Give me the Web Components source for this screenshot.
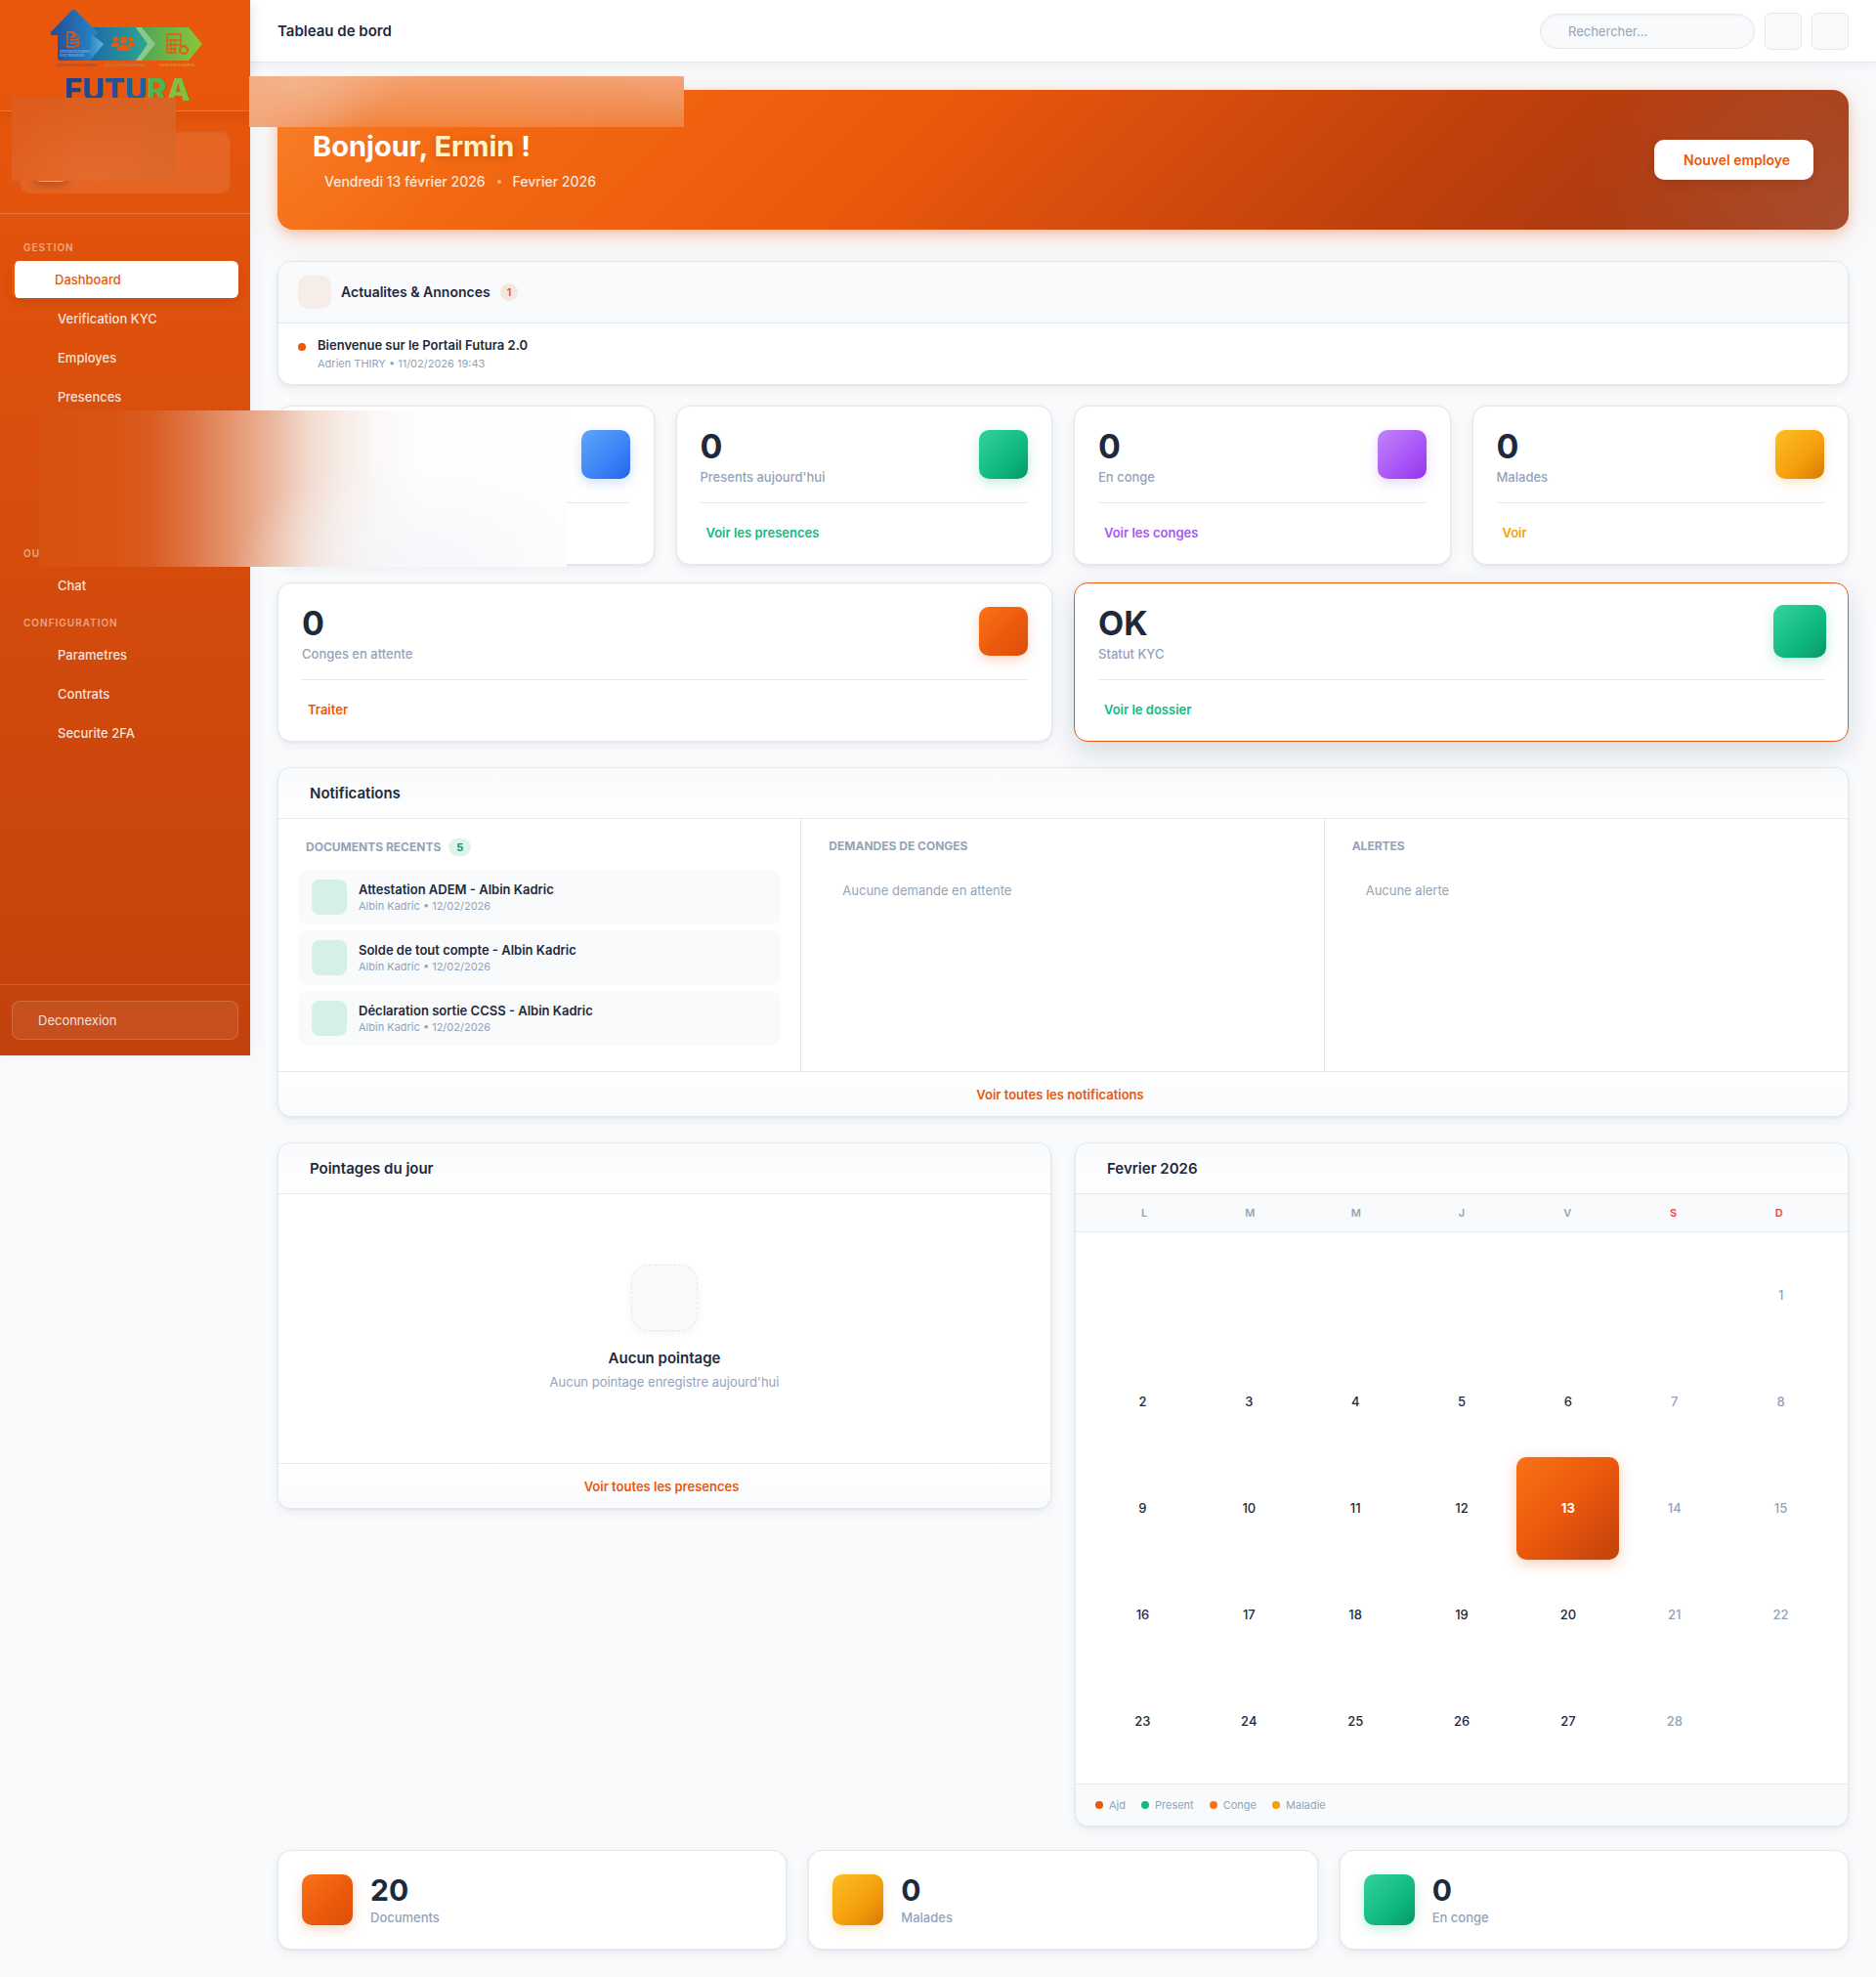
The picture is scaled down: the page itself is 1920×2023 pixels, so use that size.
<!DOCTYPE html>
<html lang="fr">
<head>
<meta charset="utf-8">
<meta name="viewport" content="width=device-width, initial-scale=1">
<title>Tableau de bord</title>
<style>
  :root {
    --orange: #ea580c;
    --orange-dark: #c2410c;
    --ink: #1e293b;
    --muted: #94a3b8;
    --line: #e2e8f0;
    --soft: #f8fafc;
    --green: #10b981;
    --shadow: 0 1px 3px rgba(15, 23, 42, 0.06), 0 4px 12px rgba(15, 23, 42, 0.05);
  }
  body {
    margin: 0;
    background: var(--soft);
    color: var(--ink);
    font-family: Inter, "Liberation Sans", sans-serif;
    font-size: 13px;
    line-height: 20px;
  }
</style>
</head>
<body>
<futura-app></futura-app>

<script>
(function FuturaDashboard() {

const GRADIENTS = {
  blue: ['#60a5fa', '#3b82f6', '#2563eb', '59, 130, 246'],
  green: ['#34d399', '#10b981', '#059669', '16, 185, 129'],
  purple: ['#c084fc', '#a855f7', '#9333ea', '168, 85, 247'],
  amber: ['#fbbf24', '#f59e0b', '#d97706', '245, 158, 11'],
  orange: ['#f97316', '#ea580c', '#d9500b', '234, 88, 12'],
};

// coloured rounded square used by all the stat cards
class ColorTile extends HTMLElement {
  connectedCallback() {
    const [from, mid, to, glow] = GRADIENTS[this.getAttribute('color')];
    this.attachShadow({mode: 'open'});
    this.shadowRoot.innerHTML = `
      <style>
        :host {
          display: block;
          flex: none;
          width: var(--tile-size, 50px);
          height: var(--tile-size, 50px);
          border-radius: 10px;
          background: linear-gradient(135deg, ${from}, ${mid} 60%, ${to});
          box-shadow: 0 4px 12px rgba(${glow}, 0.25);
        }
      </style>`;
  }
}

class FuturaLogo extends HTMLElement {
  connectedCallback() {
    this.attachShadow({mode: 'open'});
    this.shadowRoot.innerHTML = `
      <style>
        :host { display: block; height: 113px; overflow: hidden; }
        svg { display: block; margin: 0 auto; }
        text { font-family: Inter, sans-serif; }
      </style>
      <svg width="160" height="113" viewBox="48 0 160 113" role="img" aria-label="Futura">
        <defs>
          <linearGradient id="house"><stop offset="0" stop-color="#234b96"/><stop offset="1" stop-color="#2489c6"/></linearGradient>
          <linearGradient id="mid"><stop offset="0" stop-color="#1d69a8"/><stop offset="1" stop-color="#2cab8c"/></linearGradient>
          <linearGradient id="end"><stop offset="0" stop-color="#4aa556"/><stop offset="1" stop-color="#8cc63a"/></linearGradient>
          <linearGradient id="tip"><stop offset="0" stop-color="#2a86c0"/><stop offset="1" stop-color="#5fb5dd"/></linearGradient>
        </defs>
        <path d="M141 28h52l14 17-14 17h-52l14-17z" fill="url(#end)"/>
        <path d="M92 28h48l14 17-14 17H92z" fill="url(#mid)"/>
        <path d="M139 28h6l14 17-14 17h-6l12-17z" fill="#8cc88a"/>
        <path d="M92 33l14 12-14 17z" fill="url(#tip)"/>
        <path d="M75.500 10q1 0 2 1l22 22q1 2-1 3h-6v26H62q-3 0-3-3V36h-6q-2-1-1-3l21-22q1-1 2.500-1z" fill="url(#house)"/>
        <g fill="none" stroke="#ea580c" stroke-width="1.300" stroke-linecap="round">
          <path d="M78 36l-3-3h-6v15h9M75 33v4h3M72 38h3M72 41h5M72 44h5"/>
          <path d="M78 40l1 1 2-3M78 46l2 1 1-3M81 42l-3 2"/>
          <path d="M171 35h14v6h-14zM171 41v13h9M185 41v6M175 42v11M179 42v11M171 46h13M171 50h9"/>
          <circle cx="188" cy="51" r="3.500"/>
          <circle cx="188" cy="51" r="4.500" stroke-dasharray="1.500 2"/>
        </g>
        <g fill="#ea580c">
          <circle cx="118.500" cy="40" r="2.500"/>
          <circle cx="134" cy="40" r="2.500"/>
          <circle cx="126.500" cy="41" r="3.500"/>
          <path d="M114 48q0-5 4-5 3 0 4 3l-2 2zM138.500 48q0-5-4-5-3 0-4 3l2 2z"/>
          <path d="M119.500 52q0-6 7-6t7 6z"/>
        </g>
        <g font-size="4" font-weight="700">
          <text x="61" y="54" fill="#6fa6d6" font-size="3">GESTION DOCUMENT</text>
          <text x="61" y="58" fill="#6fa6d6" font-size="3">ELECTRONIQUES</text>
          <text x="57" y="68" fill="#7a5a6c">GESTION DOCUMENT</text>
          <text x="107" y="68" fill="#9a8a66">GESTION PERSONNEL</text>
          <text x="163" y="68" fill="#b7a03c">GESTION COMPTA</text>
        </g>
        <text y="103" x="66" font-size="31" font-weight="800"><tspan fill="#21428a">F</tspan><tspan fill="#1f4a94">U</tspan><tspan fill="#1e549c">T</tspan><tspan fill="#1d60a4">U</tspan><tspan fill="#55b14b">R</tspan><tspan fill="#7ec142">A</tspan></text>
      </svg>`;
  }
}

class NavLink extends HTMLElement {
  connectedCallback() {
    this.attachShadow({mode: 'open'});
    this.shadowRoot.innerHTML = `
      <style>
        :host { display: block; height: 38px; margin-bottom: 2px; }
        a {
          display: block;
          box-sizing: border-box;
          height: 38px;
          padding-left: 47px;
          border-radius: 6px;
          color: rgba(255, 255, 255, 0.85);
          font-size: 13px;
          font-weight: 500;
          line-height: 38px;
          text-decoration: none;
        }
        :host([active]) a {
          border-left: 3px solid var(--orange);
          padding-left: 41px;
          background: #fff;
          background-clip: padding-box;
          color: var(--orange);
          box-shadow: 0 4px 12px rgba(0, 0, 0, 0.1);
        }
      </style>
      <a href="#"><slot></slot></a>`;
  }
}

class AppSidebar extends HTMLElement {
  connectedCallback() {
    this.attachShadow({mode: 'open'});
    this.shadowRoot.innerHTML = `
      <style>
        :host {
          position: relative;
          z-index: 2;
          display: flex;
          flex-direction: column;
          flex: none;
          box-sizing: border-box;
          width: 256px;
          height: 1080px;
          background: linear-gradient(180deg, var(--orange), var(--orange-dark));
          box-shadow: 4px 0 16px rgba(15, 23, 42, 0.04);
        }
        header {
          border-bottom: 1px solid rgba(255, 255, 255, 0.2);
          box-shadow: 0 4px 12px rgba(0, 0, 0, 0.08);
        }
        .user {
          padding: 20px;
          border-bottom: 1px solid rgba(255, 255, 255, 0.2);
        }
        .card {
          box-sizing: border-box;
          height: 64px;
          padding: 12px 14px;
          border-radius: 10px;
          background: rgba(255, 255, 255, 0.1);
          box-shadow: inset 0 1px 3px rgba(0, 0, 0, 0.1);
        }
        .avatar {
          box-sizing: border-box;
          width: 36px;
          height: 40px;
          border: 1px solid rgba(255, 255, 255, 0.4);
          border-radius: 8px;
          background: #e8692c;
          box-shadow: 0 4px 8px rgba(0, 0, 0, 0.2);
        }
        nav { flex: 1; padding: 23px 12px 0; }
        h2 {
          margin: 0;
          padding: 1px 12px 4px;
          color: rgba(255, 255, 255, 0.5);
          font-size: 10px;
          font-weight: 600;
          line-height: 20px;
          letter-spacing: 1px;
        }
        nav > * + h2 { margin-top: 8px; }
        .gap { height: 120px; }
        footer {
          padding: 16px 12px;
          border-top: 1px solid rgba(255, 255, 255, 0.15);
        }
        button {
          display: block;
          width: 100%;
          height: 40px;
          padding: 0 26px;
          border: 1px solid rgba(255, 255, 255, 0.15);
          border-radius: 8px;
          background: rgba(255, 255, 255, 0.08);
          color: rgba(255, 255, 255, 0.85);
          font: inherit;
          font-size: 13px;
          text-align: left;
        }
      </style>
      <header><futura-logo></futura-logo></header>
      <div class="user"><div class="card"><div class="avatar"></div></div></div>
      <nav>
        <h2>GESTION</h2>
        <nav-link active>Dashboard</nav-link>
        <nav-link>Verification KYC</nav-link>
        <nav-link>Employes</nav-link>
        <nav-link>Presences</nav-link>
        <div class="gap"></div>
        <h2>OU</h2>
        <nav-link>Chat</nav-link>
        <h2>CONFIGURATION</h2>
        <nav-link>Parametres</nav-link>
        <nav-link>Contrats</nav-link>
        <nav-link>Securite 2FA</nav-link>
      </nav>
      <footer><button type="button">Deconnexion</button></footer>`;
  }
}

class AppTopbar extends HTMLElement {
  connectedCallback() {
    this.attachShadow({mode: 'open'});
    this.shadowRoot.innerHTML = `
      <style>
        :host {
          display: flex;
          align-items: center;
          gap: 10px;
          box-sizing: border-box;
          height: 64px;
          padding: 0 28px;
          border-bottom: 1px solid var(--line);
          background: #fff;
          box-shadow: 0 2px 12px rgba(15, 23, 42, 0.06);
        }
        strong { flex: 1; font-size: 15px; font-weight: 600; }
        input {
          box-sizing: border-box;
          width: 220px;
          height: 36px;
          padding: 0 28px;
          border: 1px solid var(--line);
          border-radius: 18px;
          background: var(--soft);
          box-shadow: inset 0 1px 3px rgba(15, 23, 42, 0.05);
          font: inherit;
          font-size: 13px;
        }
        input::placeholder { color: var(--muted); opacity: 1; }
        button {
          width: 38px;
          height: 38px;
          padding: 0;
          border: 1px solid var(--line);
          border-radius: 6px;
          background: var(--soft);
        }
      </style>
      <strong>Tableau de bord</strong>
      <input type="search" placeholder="Rechercher..." aria-label="Rechercher">
      <button type="button" aria-label="Messages"></button>
      <button type="button" aria-label="Profil"></button>`;
  }
}

class WelcomeHero extends HTMLElement {
  connectedCallback() {
    this.attachShadow({mode: 'open'});
    this.shadowRoot.innerHTML = `
      <style>
        :host {
          display: flex;
          align-items: center;
          justify-content: space-between;
          box-sizing: border-box;
          height: 143px;
          padding: 0 36px;
          border-radius: 16px;
          background:
            radial-gradient(circle at 100% 100%, rgba(255, 255, 255, 0.12), transparent 280px),
            radial-gradient(circle at 0 30%, rgba(255, 255, 255, 0.07), transparent 180px),
            linear-gradient(135deg, #f97316, #ea580c 40%, #c2410c 70%, #9a3412);
          box-shadow: 0 8px 32px rgba(234, 88, 12, 0.15), 0 4px 12px rgba(234, 88, 12, 0.25);
          color: #fff;
        }
        h1 {
          margin: 1px 0 8px;
          font-size: 29px;
          font-weight: 700;
          line-height: 36px;
        }
        em {
          color: #fef3c7;
          font-style: normal;
          text-shadow: 0 2px 8px rgba(0, 0, 0, 0.2);
        }
        p {
          display: flex;
          gap: 12px;
          margin: 0;
          padding-left: 12px;
          color: rgba(255, 255, 255, 0.85);
          font-size: 14px;
          font-weight: 500;
        }
        i {
          align-self: center;
          width: 4px;
          height: 4px;
          border-radius: 50%;
          background: rgba(255, 255, 255, 0.5);
        }
        button {
          height: 41px;
          padding: 0 24px 0 30px;
          border: 0;
          border-radius: 10px;
          background: #fff;
          box-shadow: 0 4px 12px rgba(0, 0, 0, 0.1);
          color: var(--orange);
          font: inherit;
          font-size: 14px;
          font-weight: 600;
        }
      </style>
      <div>
        <h1>Bonjour, <em>Ermin</em> !</h1>
        <p><span>Vendredi 13 février 2026</span><i></i><span>Fevrier 2026</span></p>
      </div>
      <button type="button">Nouvel employe</button>`;
  }
}

class NewsCard extends HTMLElement {
  connectedCallback() {
    this.attachShadow({mode: 'open'});
    this.shadowRoot.innerHTML = `
      <style>
        :host {
          display: block;
          overflow: hidden;
          border: 1px solid var(--line);
          border-radius: 14px;
          background: #fff;
          box-shadow: var(--shadow);
        }
        header {
          display: flex;
          align-items: center;
          gap: 10px;
          padding: 14px 20px;
          border-bottom: 1px solid var(--line);
          background: var(--soft);
        }
        .icon {
          width: 34px;
          height: 34px;
          border-radius: 10px;
          background: rgba(234, 88, 12, 0.08);
        }
        h2 { margin: 0; font-size: 14px; font-weight: 600; line-height: 22px; }
        .badge {
          padding: 0 7px;
          border-radius: 9px;
          background: rgba(234, 88, 12, 0.12);
          color: var(--orange);
          font-size: 11px;
          font-weight: 600;
          line-height: 18px;
        }
        article { display: flex; gap: 12px; padding: 12px 20px; }
        .dot {
          width: 8px;
          height: 8px;
          margin-top: 8px;
          border-radius: 50%;
          background: var(--orange);
        }
        h3 { margin: 0; font-size: 13px; font-weight: 600; }
        p { margin: 0; color: var(--muted); font-size: 11px; line-height: 18px; }
      </style>
      <header>
        <div class="icon"></div>
        <h2>Actualites &amp; Annonces</h2>
        <span class="badge">1</span>
      </header>
      <article>
        <div class="dot"></div>
        <div>
          <h3>Bienvenue sur le Portail Futura 2.0</h3>
          <p>Adrien THIRY • 11/02/2026 19:43</p>
        </div>
      </article>`;
  }
}

// <stat-card value="" label="" color="">link text</stat-card>
class StatCard extends HTMLElement {
  connectedCallback() {
    const color = this.getAttribute('color');
    this.attachShadow({mode: 'open'});
    this.shadowRoot.innerHTML = `
      <style>
        :host {
          display: block;
          padding: 24px;
          border: 1px solid var(--line);
          border-radius: 14px;
          background: #fff;
          box-shadow: var(--shadow);
        }
        :host([wide]) { grid-column: span 2; }
        :host([highlight]) {
          border-color: var(--orange);
          box-shadow: 0 10px 28px rgba(15, 23, 42, 0.14);
        }
        :host([highlight]) color-tile { transform: scale(1.08); }
        .top { display: flex; justify-content: space-between; height: 58px; }
        .value { font-size: 34px; font-weight: 700; line-height: 34px; }
        .label { margin-top: 4px; color: var(--muted); font-weight: 500; }
        .foot {
          margin-top: 16px;
          padding: 22px 6px 0;
          border-top: 1px solid var(--line);
          line-height: 16px;
        }
        a {
          color: ${GRADIENTS[color][1]};
          font-size: 13px;
          font-weight: 600;
          text-decoration: none;
        }
      </style>
      <div class="top">
        <div>
          <div class="value">${this.getAttribute('value')}</div>
          <div class="label">${this.getAttribute('label')}</div>
        </div>
        <color-tile color="${color}"></color-tile>
      </div>
      <div class="foot"><a href="#"><slot></slot></a></div>`;
  }
}

class MiniStat extends HTMLElement {
  connectedCallback() {
    this.attachShadow({mode: 'open'});
    this.shadowRoot.innerHTML = `
      <style>
        :host {
          --tile-size: 52px;
          display: flex;
          gap: 18px;
          padding: 24px;
          border: 1px solid var(--line);
          border-radius: 14px;
          background: #fff;
          box-shadow: var(--shadow);
        }
        .value { font-size: 30px; font-weight: 700; line-height: 32px; }
        .label { margin-top: 4px; color: var(--muted); font-weight: 500; line-height: 16px; }
      </style>
      <color-tile color="${this.getAttribute('color')}"></color-tile>
      <div>
        <div class="value">${this.getAttribute('value')}</div>
        <div class="label">${this.getAttribute('label')}</div>
      </div>`;
  }
}

// titled card, the "more" attribute adds a footer link
class PanelCard extends HTMLElement {
  connectedCallback() {
    const more = this.getAttribute('more');
    this.attachShadow({mode: 'open'});
    this.shadowRoot.innerHTML = `
      <style>
        :host {
          display: block;
          overflow: hidden;
          border: 1px solid var(--line);
          border-radius: 14px;
          background: #fff;
          box-shadow: var(--shadow);
        }
        h2 {
          margin: 0;
          padding: 0 32px;
          border-bottom: 1px solid var(--line);
          background: linear-gradient(180deg, var(--soft), #fff);
          font-size: 15px;
          font-weight: 600;
          line-height: 51px;
        }
        footer {
          padding: 13px 6px 12px 0;
          border-top: 1px solid var(--line);
          background: linear-gradient(180deg, #fff, var(--soft));
          line-height: 20px;
          text-align: center;
        }
        a { color: var(--orange); font-weight: 600; text-decoration: none; }
      </style>
      <h2>${this.getAttribute('heading')}</h2>
      <slot></slot>
      ${more ? `<footer><a href="#">${more}</a></footer>` : ''}`;
  }
}

class NotificationColumns extends HTMLElement {
  connectedCallback() {
    const docs = ['Attestation ADEM', 'Solde de tout compte', 'Déclaration sortie CCSS'];
    this.attachShadow({mode: 'open'});
    this.shadowRoot.innerHTML = `
      <style>
        :host { display: grid; grid-template-columns: repeat(3, 1fr); }
        section { padding: 20px 20px 26px; }
        section:not(:last-child) { border-right: 1px solid var(--line); }
        h3 {
          display: flex;
          align-items: center;
          gap: 8px;
          margin: 0 8px 14px;
          color: var(--muted);
          font-size: 12px;
          font-weight: 700;
          line-height: 16px;
        }
        .badge {
          padding: 0 8px;
          border-radius: 9px;
          background: rgba(16, 185, 129, 0.15);
          color: #059669;
          font-size: 11px;
          line-height: 18px;
        }
        .doc {
          display: flex;
          gap: 12px;
          padding: 10px 14px;
          border-radius: 10px;
          background: var(--soft);
        }
        .doc + .doc { margin-top: 6px; }
        .icon {
          width: 36px;
          height: 36px;
          border-radius: 8px;
          background: #d5f0e8;
        }
        b { display: block; font-weight: 600; line-height: 21px; }
        small { display: block; color: var(--muted); font-size: 11px; line-height: 13px; }
        p { margin: 0; padding: 13px 22px; color: var(--muted); }
      </style>
      <section>
        <h3>DOCUMENTS RECENTS <span class="badge">5</span></h3>
        ${docs.map((name) => `
          <div class="doc">
            <div class="icon"></div>
            <div><b>${name} - Albin Kadric</b><small>Albin Kadric • 12/02/2026</small></div>
          </div>`).join('')}
      </section>
      <section><h3>DEMANDES DE CONGES</h3><p>Aucune demande en attente</p></section>
      <section><h3>ALERTES</h3><p>Aucune alerte</p></section>`;
  }
}

class EmptyState extends HTMLElement {
  connectedCallback() {
    this.attachShadow({mode: 'open'});
    this.shadowRoot.innerHTML = `
      <style>
        :host { display: block; padding: 72px 20px 73px; text-align: center; }
        .icon {
          box-sizing: border-box;
          width: 68px;
          height: 68px;
          margin: 0 auto 18px;
          border: 1px dashed var(--line);
          border-radius: 18px;
          background: var(--soft);
          box-shadow: 0 2px 8px rgba(15, 23, 42, 0.05);
        }
        h3 { margin: 0; font-size: 15px; font-weight: 600; }
        p { margin: 4px 0 0; color: var(--muted); }
      </style>
      <div class="icon"></div>
      <h3>Aucun pointage</h3>
      <p>Aucun pointage enregistre aujourd'hui</p>`;
  }
}

class MonthCalendar extends HTMLElement {
  connectedCallback() {
    const today = 13;
    const cells = [];
    for (let i = 0; i < 35; i++) {
      const day = i - 5;
      const number = day >= 1 && day <= 28 ? day : '';
      const kind = day === today ? 'today' : (i % 7 > 4 ? 'weekend' : '');
      cells.push(`<span class="${kind}">${number}</span>`);
    }
    this.attachShadow({mode: 'open'});
    this.shadowRoot.innerHTML = `
      <style>
        :host { display: block; }
        .week, .days {
          display: grid;
          grid-template-columns: repeat(7, 1fr);
          text-align: center;
        }
        .week {
          padding: 0 16px;
          border-bottom: 1px solid var(--line);
          background: var(--soft);
          color: var(--muted);
          font-size: 11px;
          font-weight: 600;
          line-height: 38px;
        }
        .week span:nth-child(n + 6) { color: #ef4444; }
        .days { gap: 4px; padding: 12px 16px; }
        .days span {
          display: flex;
          align-items: center;
          justify-content: center;
          aspect-ratio: 1;
          border-radius: 10px;
          font-weight: 500;
        }
        .days .weekend { color: var(--muted); }
        .days .today {
          background: linear-gradient(135deg, #f97316, #ea580c 50%, #c2410c);
          box-shadow: 0 4px 14px rgba(234, 88, 12, 0.3);
          color: #fff;
          font-weight: 700;
        }
        footer {
          display: flex;
          gap: 16px;
          padding: 12px 20px;
          border-top: 1px solid var(--line);
          background: var(--soft);
          color: var(--muted);
          font-size: 11px;
          line-height: 18px;
        }
        footer span { display: flex; align-items: center; gap: 6px; }
        i { width: 8px; height: 8px; border-radius: 50%; }
      </style>
      <div class="week">${['L', 'M', 'M', 'J', 'V', 'S', 'D'].map((d) => `<span>${d}</span>`).join('')}</div>
      <div class="days">${cells.join('')}</div>
      <footer>
        <span><i style="background: #ea580c"></i>Ajd</span>
        <span><i style="background: #10b981"></i>Present</span>
        <span><i style="background: #f97316"></i>Conge</span>
        <span><i style="background: #f59e0b"></i>Maladie</span>
      </footer>`;
  }
}

class FuturaApp extends HTMLElement {
  connectedCallback() {
    this.attachShadow({mode: 'open'});
    this.shadowRoot.innerHTML = `
      <style>
        :host { position: relative; display: flex; align-items: flex-start; }
        .page { flex: 1; min-width: 0; }
        main { padding: 28px; }
        news-card { margin-top: 32px; }
        .stats {
          display: grid;
          grid-template-columns: repeat(4, 1fr);
          gap: 18px 22px;
          margin: 21px 0 26px;
        }
        .panels {
          display: grid;
          grid-template-columns: repeat(2, 1fr);
          align-items: start;
          gap: 24px;
          margin: 26px 0 24px;
        }
        .totals {
          display: grid;
          grid-template-columns: repeat(3, 1fr);
          gap: 22px;
        }
        /* privacy masks laid over the page */
        .mask { position: absolute; z-index: 3; }
        .mask.user {
          left: 12px; top: 100px; width: 168px; height: 85px;
          background:
            radial-gradient(ellipse 120px 80px at 50% 100%, rgba(236, 114, 54, 0.6), transparent),
            linear-gradient(100deg, #df5c1c, #d76526);
        }
        .mask.hero {
          left: 255px; top: 78px; width: 445px; height: 52px;
          background:
            radial-gradient(ellipse 110px 70px at 10% 0, rgba(246, 190, 150, 0.6), rgba(246, 190, 150, 0)),
            linear-gradient(90deg, #f3a47a, rgba(243, 164, 122, 0) 26%),
            linear-gradient(90deg, rgba(245, 140, 60, 0) 10%, rgba(245, 140, 60, 0.3) 45%, rgba(240, 128, 80, 0.1)),
            linear-gradient(180deg, #f4a87e, #f0823f);
        }
        .mask.menu {
          left: 40px; top: 420px; width: 540px; height: 160px;
          background:
            radial-gradient(ellipse 190px 110px at 72% 100%, rgba(243, 245, 249, 0.8), rgba(243, 245, 249, 0)),
            linear-gradient(90deg, #d75110, #d95413 14%, #d95c20 21%, #de7748 29%, #e48f68 35%,
              #e7a484 40%, #edc1ac 46%, #f2dacd 51%, #f7ebe6 57%, #fbf8f7 64%, #fefefe 72%);
        }
      </style>
      <app-sidebar></app-sidebar>
      <div class="page">
        <app-topbar></app-topbar>
        <main>
          <welcome-hero></welcome-hero>
          <news-card></news-card>
          <div class="stats">
            <stat-card value="" label="" color="blue"></stat-card>
            <stat-card value="0" label="Presents aujourd'hui" color="green">Voir les presences</stat-card>
            <stat-card value="0" label="En conge" color="purple">Voir les conges</stat-card>
            <stat-card value="0" label="Malades" color="amber">Voir</stat-card>
            <stat-card wide value="0" label="Conges en attente" color="orange">Traiter</stat-card>
            <stat-card wide highlight value="OK" label="Statut KYC" color="green">Voir le dossier</stat-card>
          </div>
          <panel-card heading="Notifications" more="Voir toutes les notifications">
            <notification-columns></notification-columns>
          </panel-card>
          <div class="panels">
            <panel-card heading="Pointages du jour" more="Voir toutes les presences">
              <empty-state></empty-state>
            </panel-card>
            <panel-card heading="Fevrier 2026">
              <month-calendar></month-calendar>
            </panel-card>
          </div>
          <div class="totals">
            <mini-stat value="20" label="Documents" color="orange"></mini-stat>
            <mini-stat value="0" label="Malades" color="amber"></mini-stat>
            <mini-stat value="0" label="En conge" color="green"></mini-stat>
          </div>
        </main>
      </div>
      <div class="mask user"></div>
      <div class="mask hero"></div>
      <div class="mask menu"></div>`;
  }
}

customElements.define('color-tile', ColorTile);
customElements.define('futura-logo', FuturaLogo);
customElements.define('nav-link', NavLink);
customElements.define('app-sidebar', AppSidebar);
customElements.define('app-topbar', AppTopbar);
customElements.define('welcome-hero', WelcomeHero);
customElements.define('news-card', NewsCard);
customElements.define('stat-card', StatCard);
customElements.define('mini-stat', MiniStat);
customElements.define('panel-card', PanelCard);
customElements.define('notification-columns', NotificationColumns);
customElements.define('empty-state', EmptyState);
customElements.define('month-calendar', MonthCalendar);
customElements.define('futura-app', FuturaApp);

})();
</script>
</body>
</html>
